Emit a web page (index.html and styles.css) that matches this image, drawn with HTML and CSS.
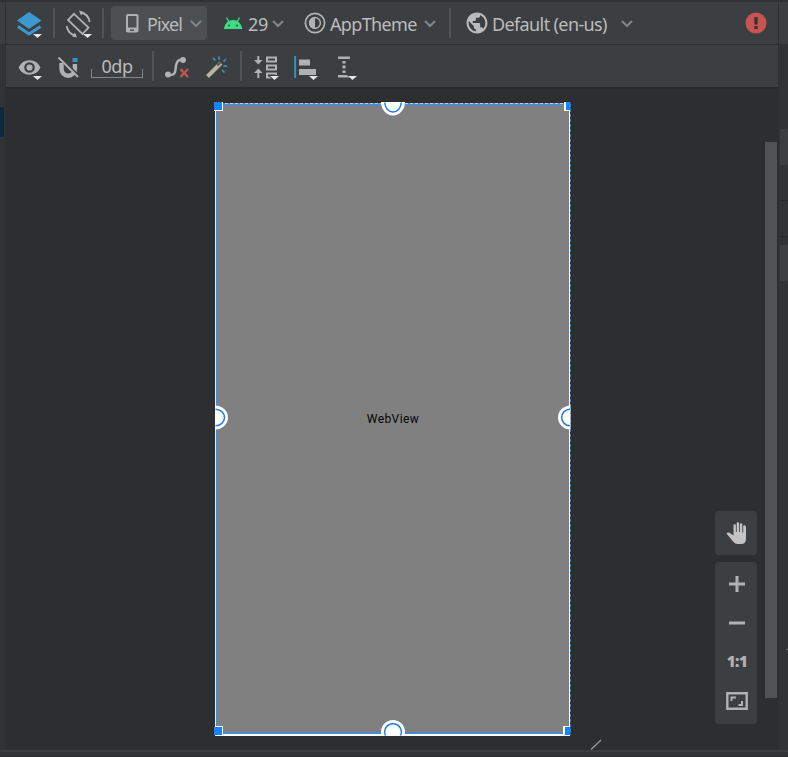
FILE: index.html
```html
<!DOCTYPE html>
<html lang="en">
<head>
<meta charset="utf-8">
<title>Layout Editor</title>
<link rel="stylesheet" href="styles.css">
</head>
<body>
<div class="editor">
  <aside class="left-edge"><div class="edge-top"></div><div class="selected-row"></div></aside>
  <main class="main">
    <header class="toolbar">
      <svg class="ic layers" width="28" height="30" viewBox="15 9 28 30"><path d="M29 11 41.500 19.500 29 28 17 19.500Z" fill="#3c98cd"/><path d="M18 25.500 29 33 40.500 25.500" fill="none" stroke="#3c98cd" stroke-width="3"/><path d="M33 33h10l-5 5z" fill="#3c3f41"/><path d="M33 33h9l-4.500 4z" fill="#e6e6e6"/></svg>
      <i class="sep"></i>
      <svg class="ic rotate" width="30" height="30" viewBox="64 9 30 30"><g fill="none" stroke="#afb1b3" stroke-width="1.800"><path d="M74 12.800 88.500 26.500 82.500 33 68 19Z"/><path d="M80.500 11.500Q88 12.500 89.700 21M66.700 25Q68 33 75.500 34.500"/></g><path d="m79 9.500 5 1.500-3 3.500zM77 36.500l-5-1 3-4z" fill="#afb1b3"/><path d="M83 33h9l-4.500 4z" fill="#e6e6e6"/></svg>
      <i class="sep"></i>
      <button class="device-button">
        <svg width="14" height="20" viewBox="125 13 14 20"><rect x="127" y="15" width="10.500" height="16.500" rx="1" fill="none" stroke="#afb1b3" stroke-width="2"/><path d="M126 27.500h12V32h-12z" fill="#afb1b3"/><path d="M130 29.500h4v1.500h-4z" fill="#4c5052"/></svg>
        <span class="label pixel">Pixel</span>
        <svg class="chev" width="14" height="10" viewBox="0 0 14 10"><path d="m2 2 5 5 5-5"/></svg>
      </button>
      <svg class="ic android" width="20" height="14" viewBox="223 16 20 14"><path d="M224 29Q224.500 24 228 21.500L226 18l1-.7 2.200 3.500q4-1.700 7.800 0L239 17.300l1 .7-2 3.500Q241.700 24 242.200 29Z" fill="#3ddc84"/><circle cx="229" cy="25.500" r=".9" fill="#3c3f41"/><circle cx="237" cy="25.500" r=".9" fill="#3c3f41"/></svg>
      <span class="label api">29</span>
      <svg class="chev" width="14" height="10" viewBox="0 0 14 10"><path d="m2 2 5 5 5-5"/></svg>
      <svg class="ic theme" width="22" height="22" viewBox="304 12 22 22"><circle cx="315" cy="23" r="9.600" fill="none" stroke="#afb1b3" stroke-width="1.700"/><circle cx="315" cy="23" r="5.400" fill="none" stroke="#afb1b3" stroke-width="1.500"/><path d="M315 17a6 6 0 0 0 0 12z" fill="#afb1b3"/></svg>
      <span class="label app">AppTheme</span>
      <svg class="chev" width="14" height="10" viewBox="0 0 14 10"><path d="m2 2 5 5 5-5"/></svg>
      <i class="sep"></i>
      <svg class="ic globe" width="22" height="22" viewBox="1.500 1.500 21 21"><path fill="#b8babc" d="M12 2C6.480 2 2 6.480 2 12s4.480 10 10 10 10-4.480 10-10S17.520 2 12 2zm-1 17.930c-3.950-.49-7-3.850-7-7.930 0-.62.080-1.210.21-1.790L9 15v1c0 1.100.9 2 2 2v1.930zm6.900-2.540c-.26-.81-1-1.390-1.900-1.390h-1v-3c0-.55-.45-1-1-1H8v-2h2c.55 0 1-.45 1-1V7h2c1.100 0 2-.9 2-2v-.41c2.930 1.190 5 4.060 5 7.410 0 2.080-.8 3.970-2.100 5.390z"/></svg>
      <span class="label locale">Default (en-us)</span>
      <svg class="chev" width="14" height="10" viewBox="0 0 14 10"><path d="m2 2 5 5 5-5"/></svg>
      <svg class="ic error" width="22" height="22" viewBox="0 0 22 22"><circle cx="11" cy="11" r="10.500" fill="#c75450"/><path d="M9.300 5h3.400v7.500H9.300zM9.300 14h3.400v3H9.300z" fill="#3f3234"/></svg>
    </header>
    <div class="toolbar second">
      <svg class="ic eye" width="26" height="24" viewBox="18 57 26 24"><path d="M18.500 67.500Q22 60.300 29.500 60.300T40.500 67.500Q37 74.700 29.500 74.700T18.500 67.500Z" fill="#afb1b3"/><circle cx="29.500" cy="67.500" r="4.200" fill="#afb1b3" stroke="#3c3f41" stroke-width="2.200"/><path d="M31.500 74h13l-6.500 7z" fill="#3c3f41"/><path d="M33 76h9l-4.500 4z" fill="#e6e6e6"/></svg>
      <svg class="ic magnet" width="24" height="24" viewBox="56 56 24 24"><path d="M61.500 63v6a6.700 6.700 0 0 0 13.400 0v-5" fill="none" stroke="#afb1b3" stroke-width="4.400"/><path d="M72.500 58h5v4h-5z" fill="#3592c4"/><path d="M60 57 79 76" stroke="#3c3f41" stroke-width="2"/><path d="M58.500 57.500 78 77" stroke="#afb1b3" stroke-width="2"/></svg>
      <div class="margin-field">0dp</div>
      <i class="sep"></i>
      <svg class="ic clear" width="26" height="24" viewBox="164 55 26 24"><path d="M168 75C177 76 175 70 176 65.500S178 59.500 183 59.500" fill="none" stroke="#afb1b3" stroke-width="2.500"/><circle cx="168" cy="74.500" r="3" fill="#afb1b3"/><circle cx="183" cy="60" r="3" fill="#afb1b3"/><path d="m180.500 69 7.500 8m0-8-7.500 8" stroke="#c75450" stroke-width="2.300"/></svg>
      <svg class="ic wand" width="26" height="24" viewBox="204 55 26 24"><path d="M207.500 76.500 221 63" stroke="#b7b39f" stroke-width="4"/><path d="m217.500 65.500 3-3" stroke="#505355" stroke-width="2"/><path d="m213 58 2.500 2.500M219 56.500V60M226 59l-2.500 2.500M223.500 66H227M222 70l2.500 2.500" stroke="#3d87ae" stroke-width="1.800"/></svg>
      <i class="sep"></i>
      <svg class="ic pack" width="26" height="26" viewBox="253 55 26 26"><g fill="none" stroke="#afb1b3" stroke-width="2"><path d="M258.300 56v6M258.300 73v5M267 57.500h9v4h-9zM267 65.500h9v4h-9zM267 73.500h9v4h-9z"/></g><path d="M254 60h8.600l-4.300 4.500zM254 73h8.600l-4.300-4.500z" fill="#afb1b3"/><path d="M268 75h13l-6.500 7z" fill="#3c3f41"/><path d="M270 76h9l-4.500 4z" fill="#e6e6e6"/></svg>
      <svg class="ic align" width="26" height="26" viewBox="293 55 26 26"><path d="M294.200 56h1.900v22h-1.900z" fill="#3592c4"/><path d="M299 59.500h11v6h-11zM299 69h17v6h-17z" fill="#afb1b3"/><path d="M307 75h13l-6.500 7z" fill="#3c3f41"/><path d="M309 76h9l-4.500 4z" fill="#e6e6e6"/></svg>
      <svg class="ic guide" width="26" height="26" viewBox="333 55 26 26"><path d="M338 56.500h12v2.500h-12zM338 75h12v2.500h-12zM342.500 61h3v2.500h-3zM342.500 65.500h3v3h-3zM342.500 70.500h3V73h-3z" fill="#afb1b3"/><path d="M346 74h13l-6.500 7z" fill="#3c3f41"/><path d="M348 76h9l-4.500 4z" fill="#e6e6e6"/></svg>
    </div>
    <section class="canvas">
      <div class="device">
        <span class="view-name">WebView</span>
        <svg class="selection" width="360" height="636" viewBox="213 101 360 636">
          <path d="M215.500 104V735M569.500 104V735" fill="none" stroke="#fff"/>
          <path d="M215 735h355" stroke="#fff" stroke-width="2"/>
          <path d="M214 104.500h355M216.500 104V734M216 733h353" fill="none" stroke="#3b8eee" stroke-width="1.300"/>
          <path d="M215 103.500h355" stroke="#a9d0fa" stroke-width="1" stroke-dasharray="3 2"/>
          <path d="M570.500 104V735" stroke="#277fe0" stroke-width="1" stroke-dasharray="3 2"/>
          <g fill="#fff"><path d="M214 102h9v9h-9zM564 102h6v9h-6zM215 726h8v9h-8zM563 726h7v9h-7z"/></g>
          <g fill="#1684fc"><path d="M214 102h8v8h-8zM566 102h4.500v8H566zM214 727h8v8h-8zM565 727h5.500v8H565z"/></g>
          <path d="M381 102a12 13.500 0 0 0 24 0zM381 736v-4a12 12 0 0 1 24 0v4zM215 405.500a13 12 0 0 1 0 24zM570.500 405.500a12.500 12 0 0 0 0 24z" fill="#fff"/>
          <path d="M384.800 102.500a8.200 9.500 0 0 0 16.400 0M385.500 735.500a8.300 8.300 0 1 1 15 0M215.500 409.200a9 8.300 0 0 1 0 16.600M570 409.200a8.300 8.300 0 0 0 0 16.600" fill="none" stroke="#257fe5" stroke-width="1.500"/>
        </svg>
      </div>
      <div class="scrollbar"></div>
      <div class="controls">
        <button class="panel pan"><svg width="22" height="24" viewBox="726 521 22 24"><path d="M746 526.500V539q0 5-5 5h-3.500q-2.500 0-4-2l-7-8.500q1-1.500 3-.7l4 2.700V525.500a1.200 1.200 0 0 1 2.400 0V532h.8v-8.500a1.200 1.200 0 0 1 2.400 0V532h.8v-7.500a1.200 1.200 0 0 1 2.400 0V532.500h.9v-6a1.200 1.200 0 0 1 2.400 0z" fill="#c3c3c3"/></svg></button>
        <div class="panel zoom">
          <button><svg width="16" height="16" viewBox="0 0 16 16"><path d="M0 8h16M8 0v16" stroke="#afb1b3" stroke-width="3"/></svg></button>
          <button><svg width="16" height="4" viewBox="0 0 16 4"><path d="M0 2h16" stroke="#afb1b3" stroke-width="3"/></svg></button>
          <button class="one">1:1</button>
          <button><svg width="22" height="18" viewBox="0 0 22 18"><path d="M1.300 1.300h19.400v15.400H1.300z" fill="none" stroke="#afb1b3" stroke-width="2.400"/><path d="M5.500 9V5.500H10M12.500 13H16V9" fill="none" stroke="#afb1b3" stroke-width="2"/></svg></button>
        </div>
      </div>
      <svg class="grip" width="12" height="11" viewBox="0 0 12 11"><path d="m1 10.500 10-9.500" stroke="#999" stroke-width="1.300"/></svg>
    </section>
  </main>
  <aside class="right-edge"><div class="edge-top"></div><div class="tab first"></div><div class="tab line"></div><div class="tab line"></div><div class="tab last"></div><div class="mark"></div></aside>
</div>
<footer class="bottom"></footer>
</body>
</html>
```

FILE: styles.css
```css
* { box-sizing: border-box; }
body { margin: 0; width: 788px; height: 757px; overflow: hidden; background: #313335; font-family: "Noto Sans", sans-serif; color: #bbb; display: flex; flex-direction: column; }
button { border: 0; padding: 0; background: none; color: inherit; font: inherit; }
svg { display: block; flex: none; }
.editor { height: 750px; display: grid; grid-template-columns: 6px 772px 10px; border-top: 2px solid #2f3133; }
.left-edge { border-right: 1px solid #2d2f31; }
.edge-top { height: 42px; background: #3c3f41; }
.selected-row { margin-top: 63px; height: 30px; width: 4px; background: #0d293e; }
.main { display: flex; flex-direction: column; min-width: 0; }
.toolbar { height: 43px; flex: none; display: flex; align-items: center; background: #3c3f41; border-bottom: 1px solid #292b2d; }
.toolbar.second { height: 44px; border-bottom-width: 2px; border-bottom-color: #27292b; }
.sep { width: 2px; height: 30px; background: #515456; flex: none; }
.chev { fill: none; stroke: #7f8488; stroke-width: 2.200; margin-top: 2px; }
.label { font-size: 18px; line-height: 26px; white-space: nowrap; flex: none; margin-top: 2px; }
.layers { margin: 4px 10px 0 9px; }
.rotate { margin: 4px 8px 0 9px; }
.device-button { display: flex; align-items: center; flex: none; width: 96px; height: 34px; margin-left: 7px; padding-left: 14px; background: #4c5052; border-radius: 4px; }
.pixel { width: 42px; margin-left: 8px; text-align: left; letter-spacing: -.9px; }
.android { margin-left: 16px; }
.api { width: 23px; margin-left: 5px; letter-spacing: -.3px; }
.theme { margin-left: 19px; }
.app { width: 93px; margin-left: 4px; letter-spacing: -.65px; }
.app + .chev { margin-right: 12px; }
.globe { margin-left: 15px; }
.locale { width: 128px; margin-left: 4px; letter-spacing: -.62px; }
.error { margin-left: 111px; }
.eye { margin-left: 12px; margin-top: 5px; }
.magnet { margin-left: 12px; margin-top: 3px; }
.margin-field { width: 52px; height: 24px; margin: 0 9px 0 11px; text-align: center; font-size: 18px; line-height: 24px; letter-spacing: -.4px; border: solid #83868a; border-width: 0 1px 1px; border-image: linear-gradient(to top, #83868a 9px, transparent 9px) 1; }
.clear { margin-left: 10px; margin-top: 1px; }
.wand { margin: 1px 10px 0 14px; }
.pack { margin: 3px 0 0 11px; }
.align, .guide { margin: 3px 0 0 14px; }
.canvas { position: relative; flex: 1; background: #2d2e30; }
.device { width: 354px; height: 633px; margin: 14px 0 0 210px; background: #808080; position: relative; display: flex; align-items: center; justify-content: center; color: #050505; font: 12px Roboto, sans-serif; letter-spacing: .4px; }
.view-name { padding-bottom: 2px; }
.selection { position: absolute; left: -3px; top: -2px; }
.scrollbar { position: absolute; right: 1px; top: 53px; width: 12px; height: 556px; background: #515254; }
.controls { position: absolute; right: 21px; top: 422px; width: 42px; display: flex; flex-direction: column; gap: 7px; }
.panel { background: #3c3f41; border-radius: 4px; display: grid; place-items: center; width: 42px; }
.pan { height: 44px; padding-left: 2px; }
.zoom { height: 162px; padding: 2px 0 4px 2px; grid-template-rows: repeat(4, 39px); }
.one { font-family: "Noto Sans", sans-serif; font-size: 15px; line-height: 18px; padding-bottom: 2px; font-weight: 900; letter-spacing: -.4px; color: #afb1b3; }
.grip { position: absolute; left: 584px; bottom: 0; }
.right-edge { border-left: 1px solid #2c2e30; }
.tab { height: 36px; margin-left: 1px; }
.tab.first, .tab.last { background: #3c3f41; }
.right-edge .first { margin-top: 85px; }
.tab.line { border-bottom: 1px solid #27292b; }
.tab.last { margin-top: 8px; }
.mark { margin: 368px 0 0 7px; height: 1px; background: #696b6d; }
.bottom { height: 7px; background: #313335; border-top: 2px solid #3a3c3e; border-bottom: 1px solid #292b2d; }
```
